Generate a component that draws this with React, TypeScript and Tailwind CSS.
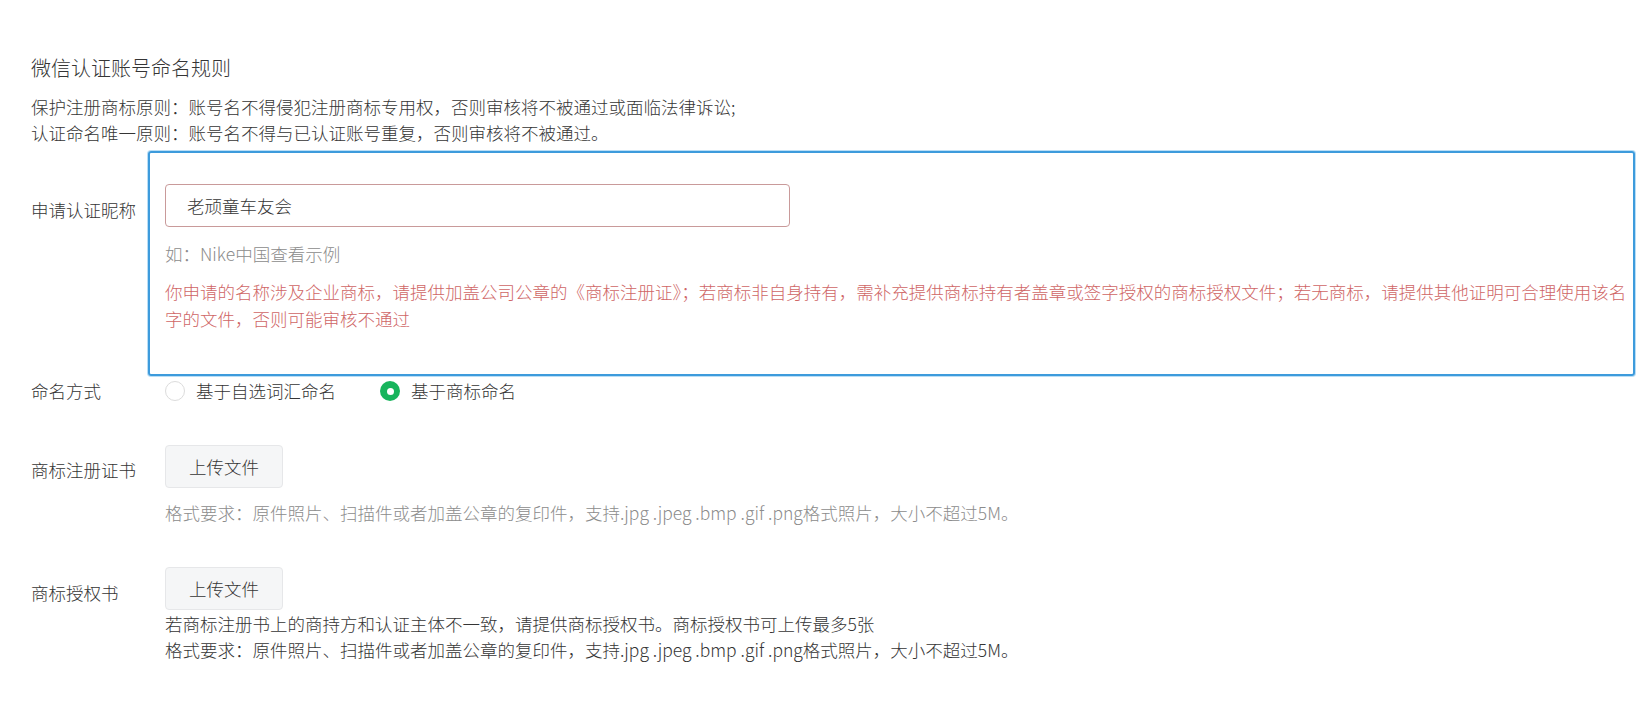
import React from "react";

const font = "font-['Noto_Sans_CJK_SC','Noto_Sans',sans-serif]";

function UploadButton() {
  return (
    <button
      type="button"
      className="w-[118px] h-[43px] shrink-0 rounded-[4px] border border-[#e6e7e9] bg-[#f5f6f7] text-[17.5px] text-[#353535] leading-[26px]"
    >
      上传文件
    </button>
  );
}

function Radio({ checked, label }: { checked?: boolean; label: string }) {
  return (
    <label className="flex items-center gap-[11px]">
      {checked ? (
        <span className="flex h-[20px] w-[20px] items-center justify-center rounded-full bg-[#18b45c]">
          <span className="h-[7px] w-[7px] rounded-full bg-white" />
        </span>
      ) : (
        <span className="h-[20px] w-[20px] rounded-full border border-[#dcdcdc] bg-white" />
      )}
      <span className="text-[17.5px] leading-[26px] text-[#353535]">{label}</span>
    </label>
  );
}

export default function App() {
  return (
    <div className={`${font} min-h-[723px] w-full bg-white pl-[31px] pt-[55px] font-light text-[#353535]`}>
      <div className="text-[20px] leading-[26px] text-[#353535]">微信认证账号命名规则</div>
      <div className="mt-[13px] text-[17.5px] leading-[26px]">
        <div>保护注册商标原则：账号名不得侵犯注册商标专用权，否则审核将不被通过或面临法律诉讼;</div>
        <div>认证命名唯一原则：账号名不得与已认证账号重复，否则审核将不被通过。</div>
      </div>

      {/* 申请认证昵称 */}
      <div className="mt-[5px] flex items-start">
        <div className="mt-[46px] w-[117px] shrink-0 text-[17.5px] leading-[26px]">申请认证昵称</div>
        <div className="h-[225px] w-[1487px] shrink-0 rounded-[3px] border-2 border-[#3d9bdc] pl-[15px] pt-[31px] shadow-[0_0_0_1px_#b9def6]">
          <div className="flex h-[43px] w-[625px] items-center rounded-[4px] border border-[#c99a9a] pl-[21px] text-[17.5px] leading-[26px] text-[#353535]">
            老顽童车友会
          </div>
          <div className="mt-[14px] text-[17.5px] leading-[26px] text-[#8c8c8c]">如：Nike中国查看示例</div>
          <div className="mt-[11px] whitespace-nowrap text-[17.5px] leading-[27px] text-[#cf6666]">
            你申请的名称涉及企业商标，请提供加盖公司公章的《商标注册证》；若商标非自身持有，需补充提供商标持有者盖章或签字授权的商标授权文件；若无商标，请提供其他证明可合理使用该名
            <br />
            字的文件，否则可能审核不通过
          </div>
        </div>
      </div>

      {/* 命名方式 */}
      <div className="mt-[2px] flex items-center">
        <div className="w-[134px] shrink-0 text-[17.5px] leading-[26px]">命名方式</div>
        <div className="flex items-center gap-[44px]">
          <Radio label="基于自选词汇命名" />
          <Radio checked label="基于商标命名" />
        </div>
      </div>

      {/* 商标注册证书 */}
      <div className="mt-[41px] flex items-start">
        <div className="mt-[12px] w-[134px] shrink-0 text-[17.5px] leading-[26px]">商标注册证书</div>
        <div className="flex flex-col items-start">
          <UploadButton />
          <div className="mt-[12px] text-[17.5px] leading-[26px] text-[#8c8c8c]">
            格式要求：原件照片、扫描件或者加盖公章的复印件，支持.jpg .jpeg .bmp .gif .png格式照片，大小不超过5M。
          </div>
        </div>
      </div>

      {/* 商标授权书 */}
      <div className="mt-[41px] flex items-start">
        <div className="mt-[13px] w-[134px] shrink-0 text-[17.5px] leading-[26px]">商标授权书</div>
        <div className="flex flex-col items-start">
          <UploadButton />
          <div className="mt-[1px] text-[17.5px] leading-[26px] text-[#353535]">
            <div>若商标注册书上的商持方和认证主体不一致，请提供商标授权书。商标授权书可上传最多5张</div>
            <div>格式要求：原件照片、扫描件或者加盖公章的复印件，支持.jpg .jpeg .bmp .gif .png格式照片，大小不超过5M。</div>
          </div>
        </div>
      </div>
    </div>
  );
}
